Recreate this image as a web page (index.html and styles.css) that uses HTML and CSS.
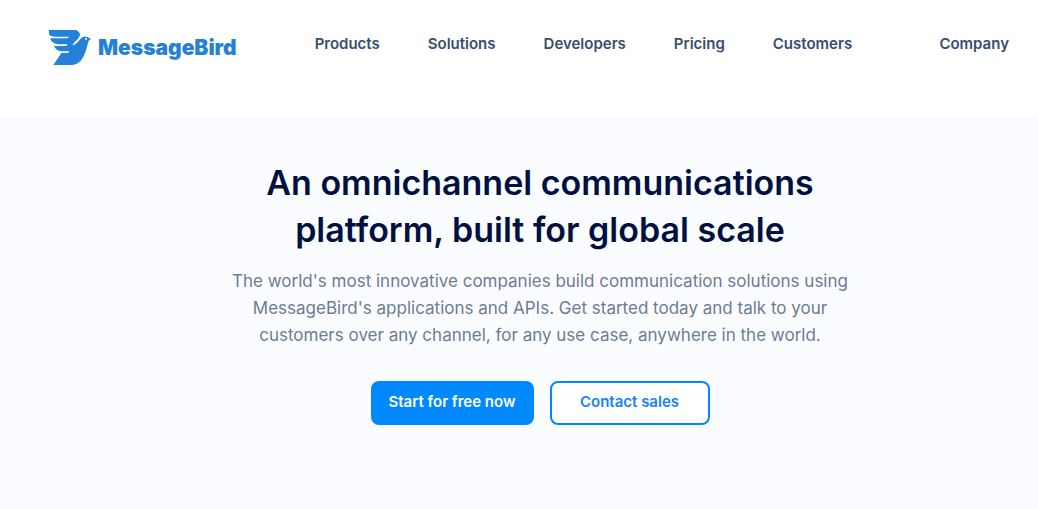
FILE: index.html
```html
<!DOCTYPE html>
<html lang="en">
<head>
<meta charset="utf-8">
<meta name="viewport" content="width=device-width, initial-scale=1">
<title>MessageBird</title>
<link rel="stylesheet" href="styles.css">
</head>
<body>
<header class="header">
  <a class="logo" href="#">
    <svg class="logo-mark" viewBox="27 30 126 105" aria-hidden="true">
      <path fill="currentColor" d="M27 30H108Q120 35 120 46Q116 58 104 66L98 74L101 76C112 70 119 57 127 52Q134 47 143 51L153 57L146 62C141 76 139 94 130 110C121 127 109 135 91 135H40L64 99H84L88 94H64Q48 92 42 78H78L84 73H53Q36 71 30 55H82L88 50H47Q28 50 27 41Z"/>
      <circle cx="138" cy="57" r="3" fill="#fff"/>
    </svg>
    <span class="logo-name">MessageBird</span>
  </a>
  <nav class="nav" aria-label="Main">
    <a href="#">Products</a>
    <a href="#">Solutions</a>
    <a href="#">Developers</a>
    <a href="#">Pricing</a>
    <a href="#">Customers</a>
    <a class="nav-last" href="#">Company</a>
  </nav>
</header>
<main class="hero">
  <h1 class="title">An omnichannel communications platform, built for global scale</h1>
  <p class="lead">The world's most innovative companies build communication solutions using MessageBird's applications and APIs. Get started today and talk to your customers over any channel, for any use case, anywhere in the world.</p>
  <div class="actions">
    <button class="button button-primary" type="button">Start for free now</button>
    <button class="button button-outline" type="button">Contact sales</button>
  </div>
</main>
</body>
</html>
```
FILE: styles.css
```css
* {
  box-sizing: border-box;
}

body {
  display: flex;
  flex-direction: column;
  min-height: 100vh;
  margin: 0;
  background: #fff;
  font-family: Inter, "Liberation Sans", sans-serif;
}

a {
  color: inherit;
  text-decoration: none;
}

.header {
  display: flex;
  align-items: flex-start;
  gap: 78px;
  padding: 30px 29px 51px 49px;
}

.logo {
  display: flex;
  align-items: center;
  gap: 7px;
  color: #2481d7;
}

.logo-mark {
  width: 42px;
  height: 35px;
}

.logo-name {
  font-size: 21px;
  font-weight: 900;
  line-height: 35px;
}

.nav {
  display: flex;
  flex: 1;
  gap: 48px;
  color: #394d6c;
  font-size: 15px;
  font-weight: 600;
  line-height: 28px;
}

.nav-last {
  margin-left: auto;
}

.hero {
  display: flex;
  flex: 1;
  flex-direction: column;
  align-items: center;
  padding: 43px 20px 40px 62px;
  background: #fbfcff;
  text-align: center;
}

.title {
  max-width: 620px;
  margin: 0;
  color: #001141;
  font-size: 34px;
  font-weight: 600;
  line-height: 47px;
}

.lead {
  max-width: 630px;
  margin: 15px 0 32px;
  color: #6b7c93;
  font-size: 17px;
  line-height: 27px;
}

.actions {
  display: flex;
  gap: 16px;
}

.button {
  height: 44px;
  padding: 0 6px 2px;
  border: 2px solid #0088ff;
  border-radius: 8px;
  font: 600 15px/24px Inter, "Liberation Sans", sans-serif;
}

.button-primary {
  min-width: 163px;
  background: #0088ff;
  color: #fff;
}

.button-outline {
  min-width: 160px;
  background: #fff;
  color: #1a82f7;
}
```
